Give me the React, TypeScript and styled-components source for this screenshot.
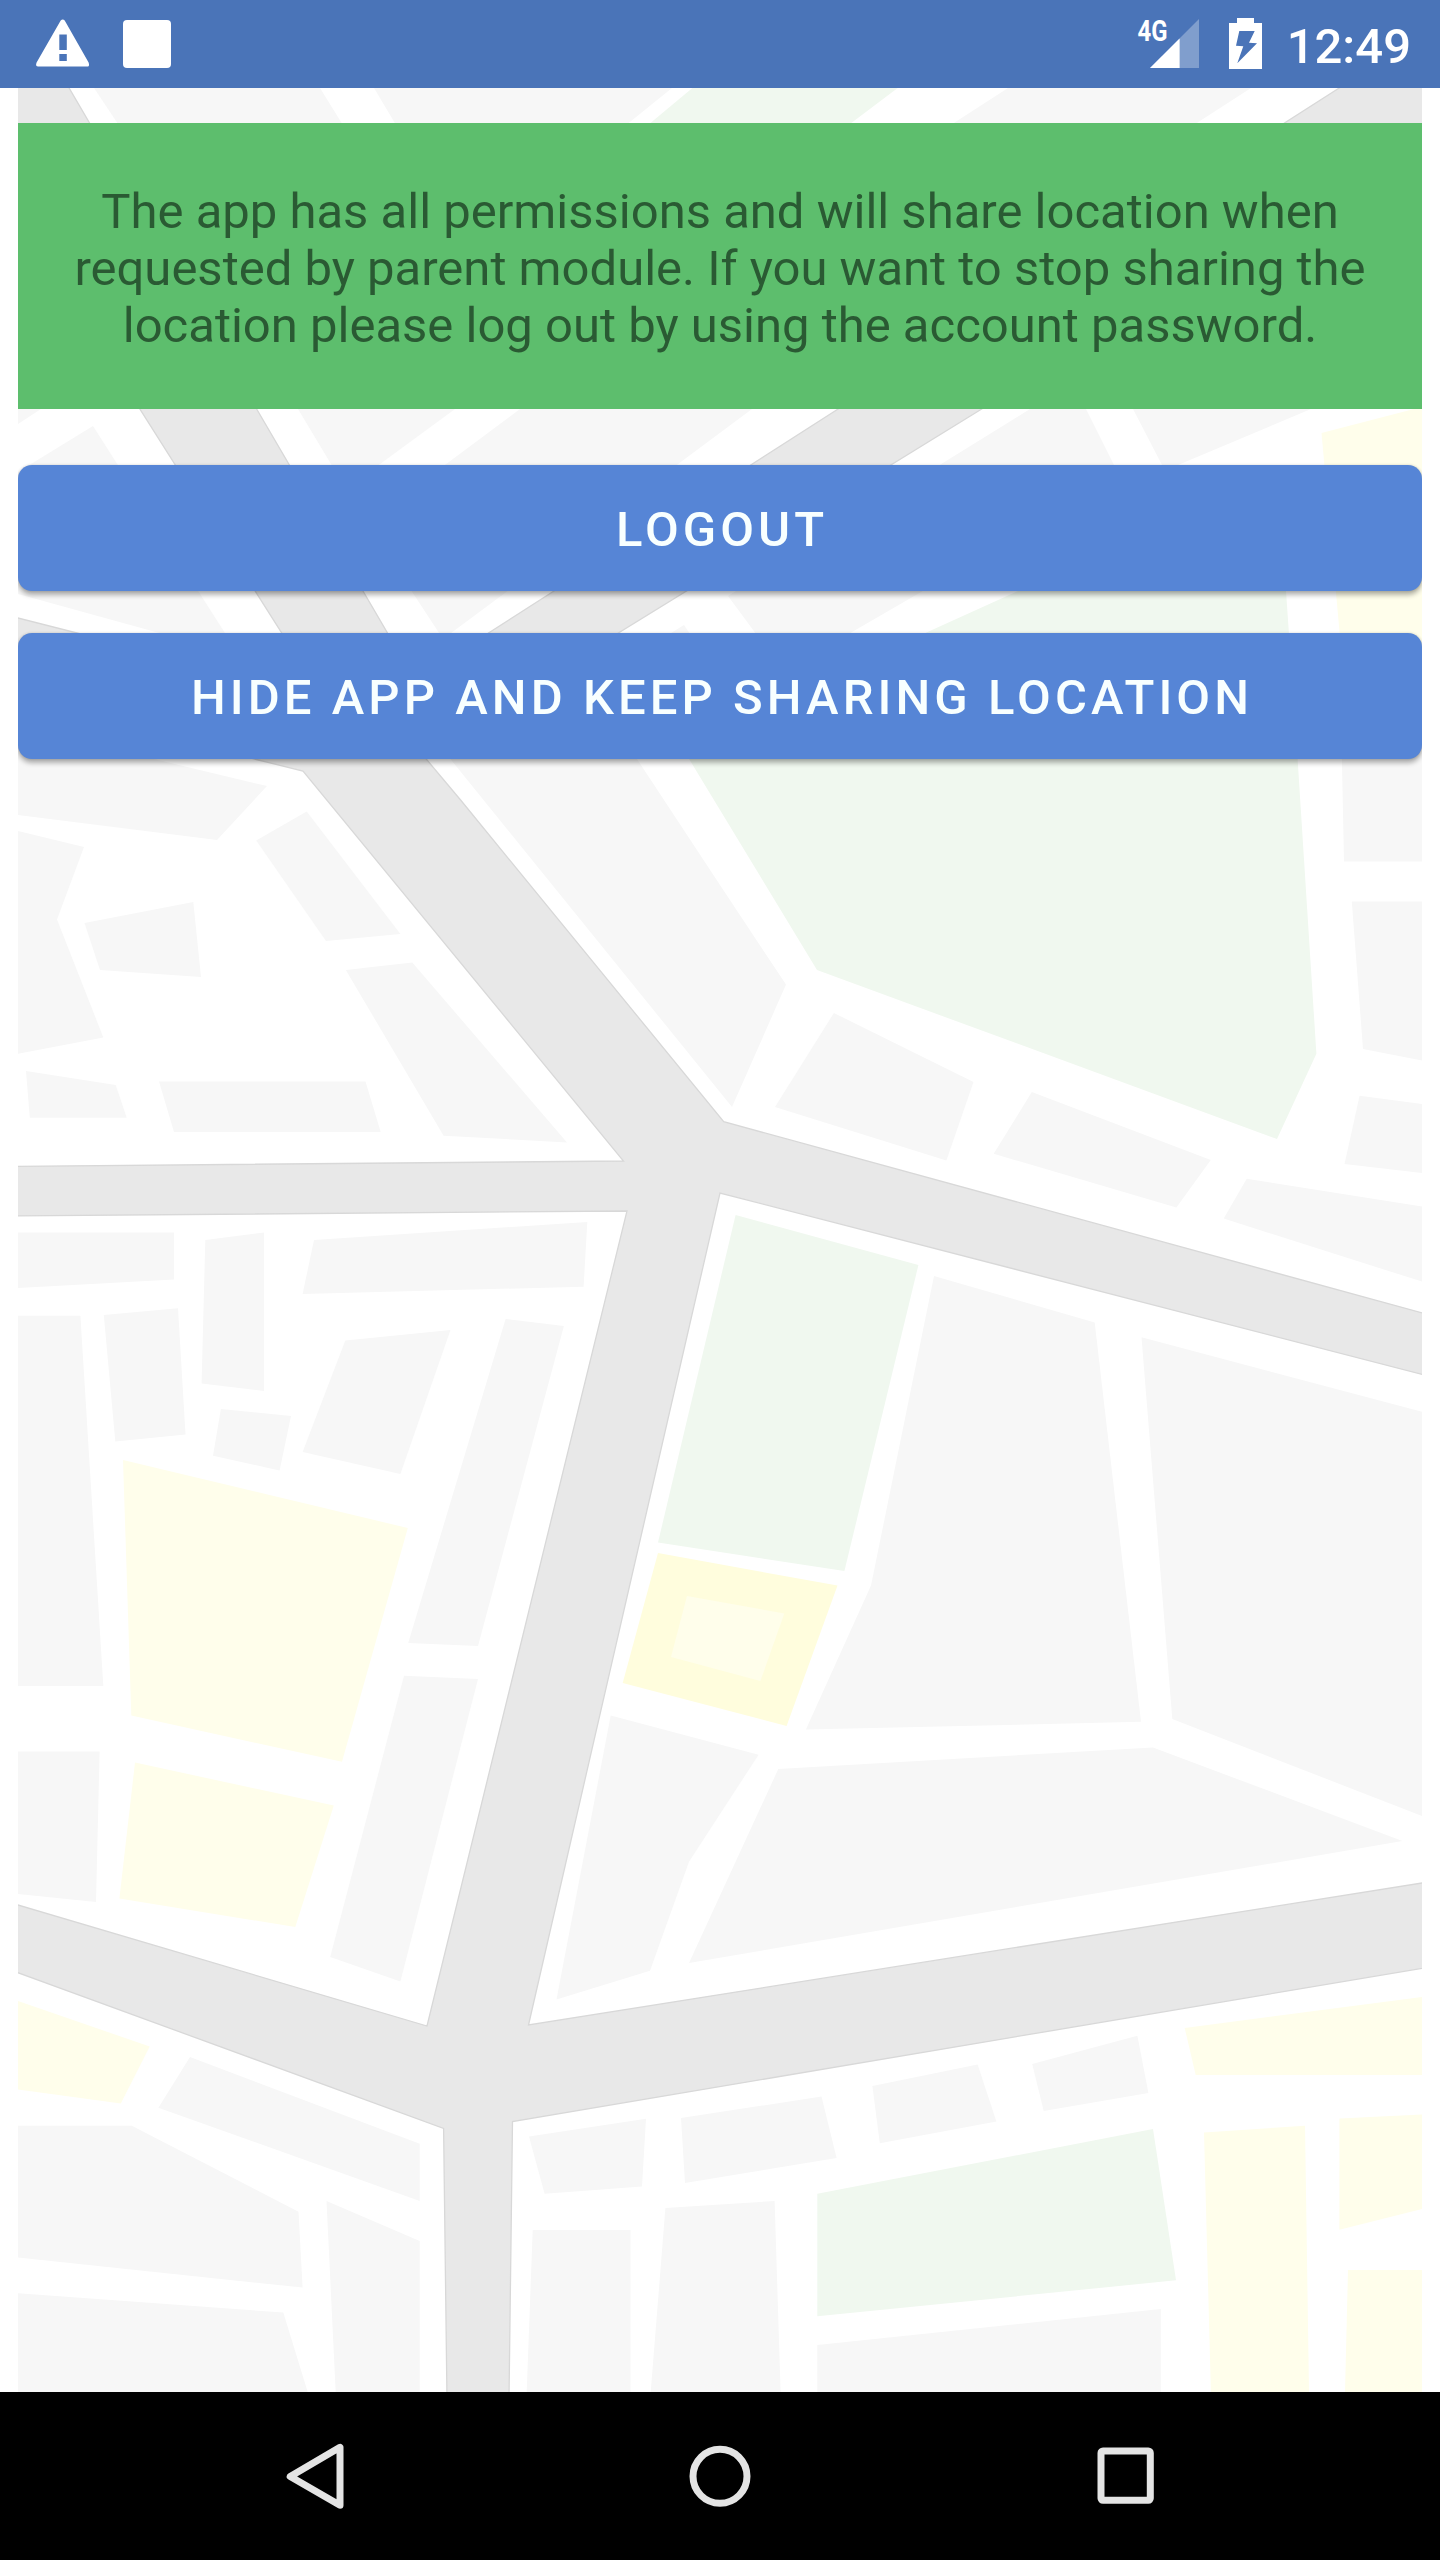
import React from 'react';
import styled, { createGlobalStyle } from 'styled-components';

const GlobalStyle = createGlobalStyle`
  * { box-sizing: border-box; }
  body { margin: 0; background: #ffffff; font-family: Roboto, "Liberation Sans", sans-serif; }
`;

const Screen = styled.div`
  display: flex;
  flex-direction: column;
  width: 1440px;
  height: 2560px;
  overflow: hidden;
`;

const StatusBar = styled.header`
  display: flex;
  align-items: center;
  justify-content: space-between;
  flex: none;
  height: 88px;
  padding: 0 29px 0 32px;
  background: #4a74b8;
  color: #ffffff;
`;

const StatusGroup = styled.div<{ $gap: number }>`
  display: flex;
  align-items: center;
  gap: ${({ $gap }) => $gap}px;
  height: 100%;
`;

const Glyph = styled.svg`
  display: block;
  flex: none;
`;

const Clock = styled.span`
  margin-left: -4px;
  font-size: 49px;
  font-weight: 500;
  line-height: 58px;
  padding-top: 5px;
`;

const Content = styled.main`
  position: relative;
  display: flex;
  flex-direction: column;
  flex: 1;
  min-height: 0;
  margin: 0 18px;
  padding-top: 35px;
  overflow: hidden;
`;

const MapBackdrop = styled.svg`
  position: absolute;
  inset: 0;
  width: 100%;
  height: 100%;
`;

const Notice = styled.p`
  position: relative;
  display: flex;
  align-items: center;
  justify-content: center;
  height: 286px;
  margin: 0;
  padding-top: 5px;
  background: #5dbe6d;
  color: #2a5a33;
  font-size: 49px;
  line-height: 57px;
  text-align: center;
  white-space: pre-line;
`;

const Actions = styled.div`
  position: relative;
  display: flex;
  flex-direction: column;
  gap: 42px;
  margin-top: 56px;
`;

const ActionButton = styled.button`
  height: 126px;
  padding: 4px 0 0 4px;
  border: 0;
  border-radius: 14px;
  background: #5685d6;
  color: #f8ffff;
  font-family: inherit;
  font-size: 49px;
  font-weight: 500;
  letter-spacing: 4.07px;
  line-height: 58px;
  text-transform: uppercase;
  box-shadow: 0 4px 5px rgba(0, 0, 0, 0.3), 0 0 3px rgba(0, 0, 0, 0.16);
`;

const NavBar = styled.nav`
  display: flex;
  justify-content: center;
  flex: none;
  height: 168px;
  background: #000000;
`;

const NavKey = styled.button`
  display: flex;
  align-items: center;
  justify-content: center;
  width: 405px;
  padding: 0;
  border: 0;
  background: none;
`;

/* Street map, drawn in screen coordinates */
const blocks = [
  '94,88 320,88 346,130 122,130',
  '374,88 672,88 620,130 399,130',
  '1008,88 1251,88 1186,130 943,130',
  '18,409 41,409 18,424',
  '93,426 239,655 18,594 18,472',
  '298,409 455,409 346,489',
  '520,409 752,409 443,639 367,523',
  '1030,409 1086,409 1120,477 852,632 790,680 728,596',
  '684,625 694,640 660,640',
  '1133,409 1311,409 1178,465 1162,465',
  '435,740 624,740 637,759 720,885 786,984.6 732,1107',
  '18,727 158,760 267,786 217,840 18,815',
  '1341.5,740 1422,740 1422,861.4 1344,861.4',
  '1351.8,901.6 1422,901.6 1422,1060.5 1363,1049',
  '1359.6,1095.8 1422,1104 1422,1173 1344.5,1164',
  '1246.7,1178.8 1422,1206.5 1422,1281.6 1223.7,1218.6',
  '1031.8,1092 1210.8,1160 1176.4,1207.4 993.7,1153.8',
  '833.9,1013 973.5,1082 946.4,1160.5 775,1107',
  '934,1276 1094.7,1322.6 1141,1721.8 805.9,1729.5 871,1585.6',
  '1141.5,1337.3 1422,1411.8 1422,1816 1172.3,1719',
  '778.3,1769 1153,1747.5 1402.4,1841 689,1963',
  '610.7,1715.5 758.6,1754.7 689,1861.7 650,1970.8 556.5,1999.5',
  '18,831 84,847 57,919.4 103.3,1037.4 18,1053.7',
  '84.5,923 193.3,902 201,977 100,970',
  '306.7,811.5 400.4,934 326,941 256.2,840.4',
  '412.3,962.5 567,1142.5 443.6,1135.7 345.8,970',
  '26,1071 115.7,1085 126.7,1117.7 29.8,1117.7',
  '159,1081.5 365.5,1081.5 380.7,1132 174,1132',
  '18,1232.5 174,1232.5 174,1279.4 18,1288',
  '205.3,1240 264,1232.5 264,1391 201.6,1383.6',
  '314,1240 587.3,1222 583.6,1286.7 302.6,1294',
  '18,1315.7 80.4,1315.7 103.3,1686 18,1686',
  '103.8,1315 178,1308.3 185.5,1434.6 115.3,1441.5',
  '220.9,1409 291,1416 279.6,1470.4 213,1455.7',
  '345.3,1340.5 450.5,1330 400.4,1474 302.6,1452',
  '505.6,1319 563.9,1326 478,1646 408.2,1643',
  '404,1675.7 478,1679 400.4,1981.5 330.2,1957',
  '18,1751.5 99.6,1751.5 96,1902 18,1893.9',
  '190,2057 419.7,2143.7 419.7,2201 158.4,2107.7',
  '18,2125.7 131.8,2125.7 298.5,2211.8 302.6,2287.6 18,2257.4',
  '18,2293.3 283.3,2312.5 307.7,2392 18,2392',
  '326.5,2201 419.7,2241 419.7,2392 335.7,2392',
  '529,2136.4 646,2118.8 642,2186.6 544.6,2193.8',
  '681,2118 821.5,2096.6 836.6,2157.9 685,2183',
  '872.4,2086 977.6,2064.5 996.4,2121.5 879.8,2143.3',
  '1032.2,2064 1137.4,2035.8 1148.4,2093 1043.7,2111',
  '817.3,2345 1160.8,2309 1160.8,2392 817.3,2392',
  '532.7,2230 630.5,2230 630.5,2392 526.7,2392',
  '665.4,2208 774.6,2201 780.6,2392 650.7,2392',
];

const parks = [
  '692.4,88 897.7,88 842,130 642,130',
  '1018,591 1280,473 1286,591 1297.6,759 1316.4,1053.8 1277,1139 817,970 680,744',
  '735.6,1215 918.4,1265 844.4,1571 658,1542.6',
  '817.3,2193.8 1153,2129 1176,2280.3 817.3,2316.3',
];

const plazas = [
  '1321.5,433 1414,409 1422,409 1422,670 1343,670',
  '123,1460 407.8,1528 342,1761.8 131.3,1715.5',
  '135,1762.6 333.8,1805.5 295.3,1927 119.4,1898.5',
  '18,2001 149.7,2046.5 120.8,2103.5 18,2089.4',
  '1184.7,2028 1422,1997 1422,2075 1195.7,2075',
  '1204,2132.6 1305,2125.7 1309,2392 1210.9,2392',
  '1339.4,2118.4 1422,2114.6 1422,2209 1339.4,2229.8',
  '1348,2270 1422,2270 1422,2392 1345,2392',
];

const roads =
  'M10 75 L61.5 75 L415 680 L1340 87.5 L1430 30 L1430 122 L981.7 409 L422 754 L460.6 800 L723.7 1121.7 ' +
  'L1430 1315 L1430 1376.5 L720 1193 L528.5 2025 L1430 1881.7 L1430 1967 L512.5 2121.5 L509 2400 ' +
  'L447 2400 L443.6 2128.4 L10 1969.8 L10 1902.6 L427 2026 L627 1211 L10 1216 L10 1166.4 ' +
  'L623.5 1161 L303 771 L10 699 L10 616 L321 695 L10 204 Z';

const StreetMap = () => (
  <MapBackdrop viewBox="18 88 1404 2304" aria-hidden="true">
    <g fill="#f7f7f7">{blocks.map((p) => <polygon key={p} points={p} />)}</g>
    <g fill="#f0f8ef">{parks.map((p) => <polygon key={p} points={p} />)}</g>
    <g fill="#fffeeb">{plazas.map((p) => <polygon key={p} points={p} />)}</g>
    <polygon fill="#fffddd" points="658,1553 837.5,1585.6 786.6,1726 622.7,1683" />
    <polygon fill="#fffeeb" points="687,1596 784.3,1613.5 760.4,1681 671,1657" />
    <path d={roads} fill="#e8e8e8" stroke="#d8d8d8" strokeWidth="1.3" />
  </MapBackdrop>
);

const WarningIcon = () => (
  <Glyph width="60" height="88" viewBox="32 0 60 88">
    <path
      fill="#fff"
      fillRule="evenodd"
      d="M60.7 20.6 Q62.7 18.2 64.7 20.6 L88.6 62.4 Q90 66.6 87 66.6 L38.2 66.6 Q35 66.4 36.6 62.4 Z M59.3 34.5 H66.8 V50 H59.3 Z M59.3 54 H66.8 V61 H59.3 Z"
    />
  </Glyph>
);

const AppSquareIcon = () => (
  <Glyph width="48" height="88" viewBox="123 0 48 88">
    <rect x="123" y="20" width="48" height="48" rx="4" fill="#fff" />
  </Glyph>
);

const SignalIcon = () => (
  <Glyph width="64" height="88" viewBox="1136 0 64 88">
    <path d="M1150 68 L1199 19 V68 Z" fill="#fff" opacity="0.3" />
    <path d="M1150 68 L1179.6 38.4 V68 Z" fill="#fff" />
    <text x="1137.5" y="41.2" fill="#fff" fontSize="29.5" fontWeight="700" textLength="30" lengthAdjust="spacingAndGlyphs">
      4G
    </text>
  </Glyph>
);

const BatteryIcon = () => (
  <Glyph width="33" height="88" viewBox="1229 0 33 88">
    <path
      fill="#fff"
      fillRule="evenodd"
      d="M1237 18 H1254 V23 H1262 V69 H1229 V23 H1237 Z M1239.3 31 L1236 45.8 L1243.3 46.3 L1237.3 63.3 L1257 43.2 L1249 42.7 L1254.7 31 Z"
    />
  </Glyph>
);

const App = () => (
  <>
    <GlobalStyle />
    <Screen>
      <StatusBar>
        <StatusGroup $gap={31}>
          <WarningIcon />
          <AppSquareIcon />
        </StatusGroup>
        <StatusGroup $gap={29}>
          <SignalIcon />
          <BatteryIcon />
          <Clock>12:49</Clock>
        </StatusGroup>
      </StatusBar>

      <Content>
        <StreetMap />
        <Notice>
          {'The app has all permissions and will share location when\nrequested by parent module. If you want to stop sharing the\nlocation please log out by using the account password.'}
        </Notice>
        <Actions>
          <ActionButton>Logout</ActionButton>
          <ActionButton>Hide app and keep sharing location</ActionButton>
        </Actions>
      </Content>

      <NavBar>
        <NavKey aria-label="Back">
          <Glyph width="72" height="72" viewBox="279 2440 72 72">
            <path d="M340 2447.3 V2505.3 L290.2 2476.5 Z" fill="none" stroke="#e4e4e4" strokeWidth="7" strokeLinejoin="round" />
          </Glyph>
        </NavKey>
        <NavKey aria-label="Home">
          <Glyph width="72" height="72" viewBox="684 2440 72 72">
            <circle cx="720" cy="2476.3" r="27" fill="none" stroke="#e4e4e4" strokeWidth="7" />
          </Glyph>
        </NavKey>
        <NavKey aria-label="Recents">
          <Glyph width="72" height="72" viewBox="1089 2440 72 72">
            <rect x="1101" y="2451" width="49.3" height="49.3" rx="2" fill="none" stroke="#e4e4e4" strokeWidth="7" />
          </Glyph>
        </NavKey>
      </NavBar>
    </Screen>
  </>
);

export default App;
